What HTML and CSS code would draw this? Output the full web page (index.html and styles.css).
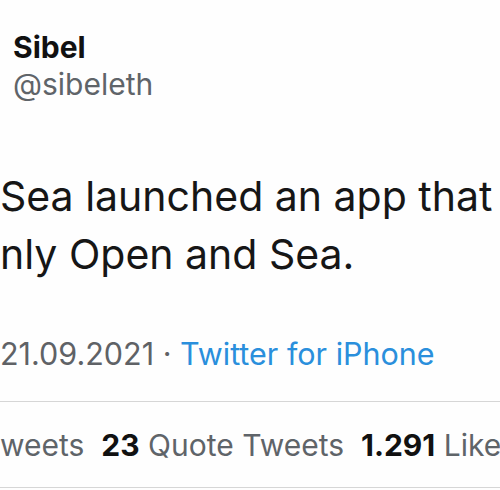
FILE: index.html
```html
<!DOCTYPE html>
<html lang="en">
<head>
<meta charset="utf-8">
<link rel="stylesheet" href="styles.css">
</head>
<body>
<main class="tweet">
  <header class="author">
    <div class="name">Sibel</div>
    <div class="handle">@sibeleth</div>
  </header>
  <p class="text"><span class="line">Sea launched an app that</span><span class="line">nly Open and Sea.</span></p>
  <div class="meta"><span class="date">21.09.2021</span><span class="sep"> · </span><a class="source">Twitter for iPhone</a></div>
  <div class="stats">
    <span class="stat"><span class="label">weets</span></span>
    <span class="stat"><b class="num">23</b> <span class="label">Quote Tweets</span></span>
    <span class="stat"><b class="num">1.291</b> <span class="label">Likes</span></span>
  </div>
</main>
</body>
</html>
```
FILE: styles.css
```css
html, body {
  margin: 0;
  padding: 0;
  background: #fefefe;
}
body {
  width: 500px;
  height: 490px;
  overflow: hidden;
  font-family: Inter, "Liberation Sans", sans-serif;
  color: #0f1419;
}
.tweet {
  display: flex;
  flex-direction: column;
  padding-top: 30px;
}
.author {
  padding-left: 13px;
}
.name {
  font-size: 30px;
  line-height: 34px;
  font-weight: 700;
  color: #111;
}
.handle {
  margin-top: 2px;
  font-size: 30px;
  line-height: 36px;
  color: #5f6469;
}
.text {
  margin: 65px 0 0;
  font-size: 41px;
  line-height: 58px;
  color: #161616;
  white-space: nowrap;
}
.line {
  display: block;
}
.meta {
  margin-top: 53px;
  font-size: 30.5px;
  line-height: 36px;
  color: #5f6266;
  white-space: nowrap;
  padding-bottom: 29px;
  border-bottom: 1px solid #d6d6d6;
}
.source {
  color: #2a8fdc;
}
.stats {
  display: flex;
  gap: 17px;
  padding: 25px 0 24px;
  font-size: 30px;
  line-height: 36px;
  white-space: nowrap;
  overflow: hidden;
  border-bottom: 1px solid #d6d6d6;
}
.num {
  font-weight: 700;
  color: #111;
}
.label {
  color: #5f6469;
}
```
